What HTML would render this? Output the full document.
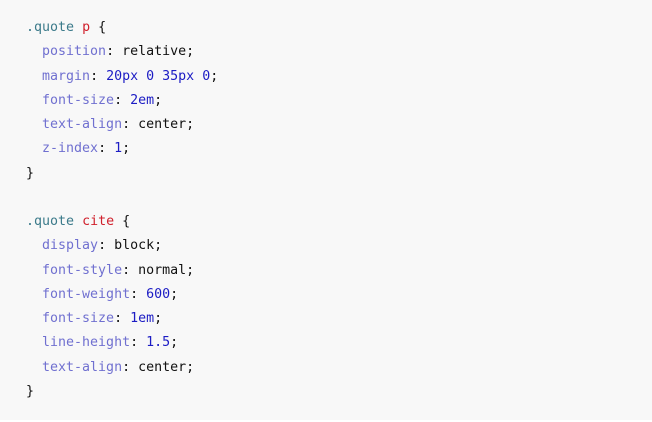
<!DOCTYPE html>
<html><head><style>
html,body{margin:0;padding:0;background:#fff;}
.box{position:absolute;left:0;top:0;width:652px;height:420px;background:#f8f8f8;}
pre{margin:0;position:absolute;left:26px;top:16px;font-family:"DejaVu Sans Mono","Liberation Mono",monospace;font-size:13.3px;line-height:24.27px;color:#111;}
.s{color:#3b7a8a}.t{color:#d0202c}.p{color:#7070d0}.n{color:#1c1cc4}
</style></head><body><div class="box"><pre><span class="s">.quote</span> <span class="t">p</span> {
  <span class="p">position</span>: relative;
  <span class="p">margin</span>: <span class="n">20px</span> <span class="n">0</span> <span class="n">35px</span> <span class="n">0</span>;
  <span class="p">font-size</span>: <span class="n">2em</span>;
  <span class="p">text-align</span>: center;
  <span class="p">z-index</span>: <span class="n">1</span>;
}

<span class="s">.quote</span> <span class="t">cite</span> {
  <span class="p">display</span>: block;
  <span class="p">font-style</span>: normal;
  <span class="p">font-weight</span>: <span class="n">600</span>;
  <span class="p">font-size</span>: <span class="n">1em</span>;
  <span class="p">line-height</span>: <span class="n">1.5</span>;
  <span class="p">text-align</span>: center;
}</pre></div></body></html>
